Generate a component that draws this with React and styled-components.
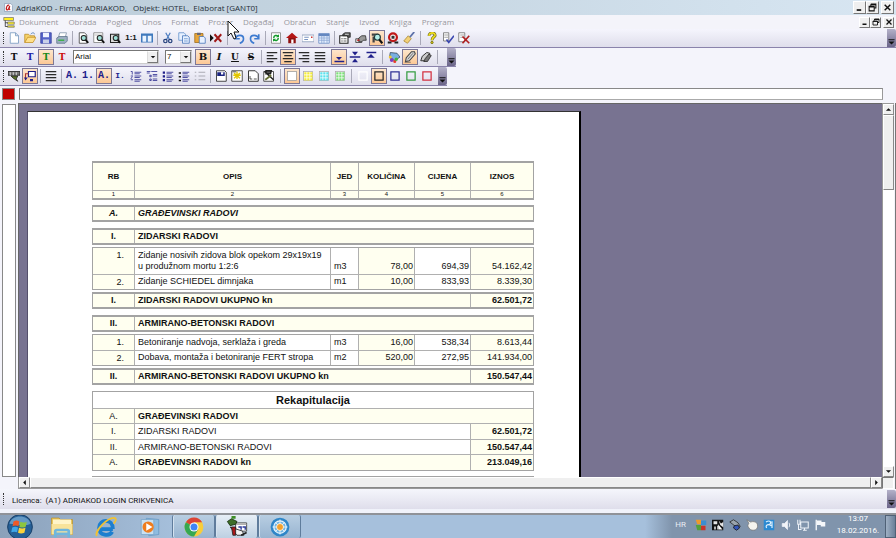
import React from "react";
import styled, { createGlobalStyle, css } from "styled-components";

const GlobalStyle = createGlobalStyle`
  *, *::before, *::after { box-sizing: border-box; }
  html, body { margin: 0; padding: 0; overflow: hidden; }
  body { font-family: "Open Sans", sans-serif; font-size: 8px; color: #111; }
  button, input, select { font: inherit; color: inherit; margin: 0; padding: 0; border-radius: 0; }
  svg { display: block; flex: none; }
`;

const ui = `"Open Sans", "Noto Sans", sans-serif`;
const small = `Roboto, "Noto Sans", sans-serif`;
const doc = `"Liberation Sans", Arial, sans-serif`;

/* ---------- frame ---------- */

const Window = styled.div`
  position: relative;
  display: flex;
  flex-direction: column;
  height: 100vh;
  background: #f4f4fb;
`;

const TitleBar = styled.header`
  display: flex;
  align-items: center;
  gap: 3px;
  height: 15px;
  padding: 0 2px 0 4px;
  background: linear-gradient(90deg, #bccdda, #c3d3df 35%, #d3e2ee 85%, #d8e6f2);
`;

const Title = styled.h1`
  flex: 1;
  margin: 0;
  font: 400 8px/15px ${ui};
  color: #262e38;
  white-space: pre;
`;

const MenuBar = styled.nav`
  display: flex;
  align-items: center;
  height: 14px;
  padding: 0 2px 0 3px;
  background: #f4f4fa;
`;

const MenuList = styled.div`
  display: flex;
  flex: 1;
  gap: 10px;
  padding-left: 4px;
`;

const MenuItem = styled.button`
  border: 0;
  background: none;
  font: 400 8px/14px ${ui};
  color: #98989e;
`;

const WindowButtons = styled.div`
  display: flex;
`;

const WindowButton = styled.button`
  display: flex;
  align-items: center;
  justify-content: center;
  width: ${(p) => (p.$small ? 11 : 13)}px;
  height: ${(p) => (p.$small ? 11 : 13)}px;
  border: 1px solid;
  border-color: #fff #777 #777 #fff;
  background: #efefef;
  &:last-child { margin-left: 2px; }
`;

/* ---------- toolbars ---------- */

const handle = css`
  &::before {
    content: "";
    width: 1px;
    height: 12px;
    margin-right: 2px;
    border-left: 1px dotted #333;
  }
`;

const Toolbar = styled.div`
  display: flex;
  align-items: center;
  align-self: ${(p) => (p.$full ? "stretch" : "flex-start")};
  height: 19px;
  padding-left: 3px;
  border-bottom: 1px solid #8a83ab;
  background: linear-gradient(#f5f5fd, #dfdeeb);
  ${handle}
`;

const Group = styled.div`
  display: flex;
  margin-left: ${(p) => p.$gap || 0}px;
`;

const Divider = styled.span`
  width: 1px;
  height: 14px;
  margin: 0 ${(p) => (p.$wide ? 3 : 2)}px;
  background: #a9a9b8;
`;

const Tool = styled.button`
  display: flex;
  align-items: center;
  justify-content: center;
  width: 16px;
  height: 16px;
  border: 1px solid transparent;
  background: none;
  ${(p) =>
    p.$on &&
    css`
      border-color: #7d7896;
      background: linear-gradient(#fde6cc, #fcc896);
    `}
`;

const faces = {
  mono: `"Liberation Mono", monospace`,
  sans: `"Liberation Sans", sans-serif`,
  serif: `"DejaVu Serif", serif`,
};

const Letter = styled.span`
  font: ${(p) => (p.$italic ? "italic " : "")}700 ${(p) => p.$size || 9}px/12px ${(p) => faces[p.$face || "serif"]};
  color: ${(p) => p.$color || "#111"};
  text-decoration: ${(p) => p.$line || "none"};
`;

const Combo = styled.label`
  display: flex;
  width: ${(p) => p.$width}px;
  height: 14px;
  margin-left: ${(p) => p.$gap}px;
  border: 1px solid;
  border-color: #777 #ccc #ccc #777;
  background: #fff;
`;

const Select = styled.select`
  flex: 1;
  min-width: 0;
  padding-left: 1px;
  border: 0;
  appearance: none;
  background: none;
  outline: 0;
  font: 400 8px/12px ${doc};
`;

const ComboArrow = styled.span`
  display: flex;
  align-items: center;
  justify-content: center;
  width: 11px;
  border: 1px solid;
  border-color: #fff #777 #777 #ddd;
  background: #efefef;
  pointer-events: none;
`;

const Grip = styled.button`
  display: flex;
  align-items: flex-end;
  justify-content: center;
  width: 9px;
  height: 18px;
  margin-left: ${(p) => p.$gap || "auto"};
  padding-bottom: 2px;
  border: 0;
  border-radius: 0 2px 2px 0;
  background: linear-gradient(#b4b1c9, #6b6589);
`;

/* ---------- work area ---------- */

const RulerRow = styled.div`
  display: flex;
  gap: 4px;
  padding: 2px 13px 3px 2px;
`;

const Swatch = styled.button`
  width: 13px;
  height: 12px;
  border: 1px solid #888;
  background: #c00000;
`;

const Formula = styled.input`
  flex: 1;
  height: 12px;
  border: 1px solid;
  border-color: #888 #999 #aaa #777;
  background: #fff;
  outline: 0;
`;

const Work = styled.div`
  display: flex;
  flex: 1;
  min-height: 0;
  padding-left: 2px;
`;

const SideRuler = styled.div`
  width: 14px;
  margin: 1px 2px 12px 0;
  border: 1px solid #888;
  background: #fff;
`;

const Viewport = styled.div`
  display: grid;
  flex: 1;
  grid-template: minmax(0, 1fr) 12px / minmax(0, 1fr) 12px;
  padding-right: 1px;
  border-right: 1px solid #777;
`;

const Canvas = styled.main`
  overflow: hidden;
  padding: 7px 0 0 8px;
  border-top: 1px solid #666;
  border-left: 1px solid #666;
  background: #787391;
`;

const Sheet = styled.article`
  width: 554px;
  min-height: 700px;
  padding: 49px 45px 0 64px;
  border: solid;
  border-width: 1px 2px 0 1px;
  border-color: #333 #000 #000 #55506c;
  background: #fff;
`;

const Bar = styled.div`
  display: flex;
  flex-direction: ${(p) => (p.$vertical ? "column" : "row")};
  background: ${(p) => (p.$vertical ? "#fff" : "#efefef")};
  border: 1px solid #999;
  border-width: ${(p) => (p.$vertical ? "1px 0 0 1px" : "0 0 1px 1px")};
`;

const BarButton = styled.button`
  display: flex;
  flex: none;
  align-items: center;
  justify-content: center;
  width: 11px;
  height: 11px;
  border: 1px solid;
  border-color: #fff #888 #888 #fff;
  background: #f0f0f0;
`;

const Thumb = styled.div`
  flex: ${(p) => (p.$vertical ? "0 0 20%" : "1")};
  border: 1px solid;
  border-color: #fff #888 #888 #fff;
  background: #efefef;
`;

const Space = styled.div`
  flex: 1;
`;

const Corner = styled.div`
  border: 1px solid;
  border-color: #777 #fff #fff #777;
  background: #f0f0f0;
`;

/* ---------- bill of quantities ---------- */

const Table = styled.table`
  width: 100%;
  table-layout: fixed;
  border-collapse: separate;
  border-spacing: 0;
  margin-top: ${(p) => p.$gap || 0}px;
  border: solid #a3a3a3;
  border-width: ${(p) => (p.$thick ? "2px 1px" : "1px")};
  font: 400 9px/11px ${doc};
  background: #fff;
`;

const Row = styled.tr`
  height: ${(p) => p.$h}px;
  background: ${(p) => (p.$tint ? "#fffff0" : "transparent")};
  & > * {
    border-bottom: ${(p) => (p.$last ? "0" : "1px solid #b0b0b0")};
  }
`;

const cell = css`
  padding: 0;
  border-left: 1px solid #b0b0b0;
  white-space: nowrap;
  text-align: ${(p) => p.$align || "left"};
  vertical-align: middle;
  font-weight: ${(p) => (p.$bold ? 700 : 400)};
  font-style: ${(p) => (p.$italic ? "italic" : "normal")};
  font-size: ${(p) => p.$size || 9}px;
  background: ${(p) => (p.$tint ? "#fffff0" : "transparent")};
  &:first-child { border-left: 0; }
`;

const Head = styled.th`
  ${cell}
  line-height: ${(p) => (p.$size === 6 ? 7 : 11)}px;
`;

const Cell = styled.td`
  ${cell}
`;

const Code = styled(Cell)`
  text-align: center;
`;

const Text = styled(Cell)`
  padding-left: 3px;
`;

const Amount = styled(Cell)`
  padding-right: 1px;
  text-align: right;
`;

const ItemRow = styled(Row)`
  & > td {
    padding-bottom: 2px;
    vertical-align: bottom;
  }
  & > td:first-child {
    padding: 2px 10px 0 0;
    text-align: right;
    vertical-align: top;
  }
`;

/* ---------- status and taskbar ---------- */

const StatusBar = styled.footer`
  display: flex;
  align-items: center;
  height: 20px;
  padding-left: 3px;
  background: linear-gradient(#f5f6fc, #dfdeeb);
  ${handle}
`;

const License = styled.span`
  padding: 4px 0 0 6px;
  font: 400 8px/16px ${small};
  white-space: pre;
`;

const Edge = styled.div`
  height: 6px;
  border-bottom: 2px solid #8f9298;
  background: #f0f2fa;
`;

const Taskbar = styled.footer`
  display: flex;
  align-items: stretch;
  height: 23px;
  background: linear-gradient(90deg, #8ba1ba, #a6c0dc 20%, #a6c0dc 72%, #8094ac 75%, #8094ac);
`;

const TaskButton = styled.button`
  display: flex;
  align-items: center;
  justify-content: center;
  width: 44px;
  overflow: hidden;
  border: 0;
  background: none;
  &:first-child { width: 40px; }
  ${(p) =>
    p.$open &&
    css`
      width: 43px;
      border: solid #5f7c9c;
      border-width: 0 1px;
      border-radius: 2px;
      background: ${p.$active ? "linear-gradient(#e6eef6, #bdd0e2)" : "linear-gradient(#b8cee2, #98b4d0)"};
      box-shadow: inset 1px 0 #d4e2ef;
    `}
`;

const Tray = styled.div`
  display: flex;
  align-items: center;
  gap: 5px;
  margin-left: auto;
  padding-bottom: 4px;
  color: #fff;
  font: 400 8px/12px ${small};
`;

const Language = styled.span`
  margin-right: 4px;
  color: #e8edf4;
`;

const Clock = styled.time`
  width: 54px;
  text-align: center;
`;

const Desktop = styled.button`
  width: 11px;
  border: 1px solid #4f6176;
  background: linear-gradient(90deg, #9fb0c4, #6a7f98);
`;

const Pointer = styled.svg`
  position: absolute;
  left: 227px;
  top: 20px;
  pointer-events: none;
`;

/* ---------- icons ---------- */

const navy = "#20208a";
const page = <path d="M3 1h7l3 3v11H3z" fill="#fff" stroke="#333" />;
const lens = (
  <>
    <circle cx="9" cy="8" r="3.4" fill="#9fe0d8" stroke="#222" strokeWidth="1.4" />
    <path d="M11.5 10.5l3.5 4" stroke="#111" strokeWidth="2.4" />
  </>
);
const lines = (rows) =>
  rows.map(([x, w], i) => <rect key={i} x={x} y={1.4 + i * 4} width={w} height="1.6" fill="#222" />);
const listLines = <path d="M6 3h9M6 8h9M6 13h9M6 5h7M6 10h7M6 15h7" stroke={navy} />;
const grid = (color) => (
  <>
    <rect x="2" y="2" width="12" height="12" fill="#fff" stroke="#aaa" />
    {[3, 7, 11].map((x) => [3, 7, 11].map((y) => <rect key={`${x}-${y}`} x={x} y={y} width="3" height="3" fill={color} />))}
  </>
);
const box = (color) => <rect x="2.5" y="2.5" width="11" height="11" fill="none" stroke={color} strokeWidth="1.6" />;

const drawings = {
  app: (
    <>
      <path d="M1 1h11l3 3v11H1z" fill="#fff" stroke="#6c85a8" />
      <path d="M9 4c-4-1-6 6-4 8 2 1 4-2 5-7l-1 6 2 1" fill="none" stroke="#c32020" strokeWidth="2.3" />
    </>
  ),
  tree: (
    <>
      <path d="M1 2h13v4H1zM6 8h9v3H6zM6 13h9v2H6z" fill="#ffee20" stroke="#777" />
      <path d="M3 6v8h3M3 9h3" stroke="#222" fill="none" />
    </>
  ),
  fresh: <path d="M3 1h7l4 4v10H3zM10 1v4h4" fill="#fff" stroke="#6d93bb" />,
  open: (
    <>
      <path d="M1 14V3h5l2 2h6v3" fill="#f6d26b" stroke="#b98a22" />
      <path d="M1 14l4-7h11l-4 7z" fill="#ffe08a" stroke="#c28e20" />
      <path d="M9 3c2-3 5-2 5 0" stroke="#3b70b0" fill="none" />
    </>
  ),
  save: (
    <>
      <path d="M1 1h14v14H1z" fill="#5462c8" stroke="#333d9c" />
      <path d="M4 1h8v6H4z" fill="#eef2ff" />
      <path d="M4 10h8v5H4z" fill="#c9d0e8" />
    </>
  ),
  print: (
    <>
      <path d="M5 1h9l-2 7H3z" fill="#fff" stroke="#7c8fa6" />
      <path d="M1 8l3-2h11v6l-3 3H1z" fill="#9caec2" stroke="#5b7088" />
      <path d="M3 11h8" stroke="#3fb04a" strokeWidth="2" />
    </>
  ),
  preview: <>{page}{lens}</>,
  previewB: (
    <>
      <path d="M1 1h12v13H1z" fill="#fff" stroke="#777" />
      <path d="M2 4h10" stroke="#aaa" />
      {lens}
    </>
  ),
  previewC: (
    <>
      <path d="M2 3h11v11H2z" fill="#ddd" stroke="#222" strokeWidth="1.4" />
      {lens}
    </>
  ),
  book: (
    <>
      <path d="M0 2h16v12H0z" fill="#3f79bd" />
      <path d="M2 5h5v8H2zM9 5h5v8H9z" fill="#eaf4ff" />
    </>
  ),
  cut: (
    <>
      <path d="M5 1l5 9M11 1L6 10" stroke="#4b7cc0" strokeWidth="1.6" />
      <circle cx="4.5" cy="12" r="2.3" fill="none" stroke="#23407c" strokeWidth="1.6" />
      <circle cx="11" cy="12" r="2.3" fill="none" stroke="#23407c" strokeWidth="1.6" />
    </>
  ),
  copy: (
    <>
      <path d="M1 1h7l2 2v8H1z" fill="#e7f0ff" stroke="#5a8cc8" />
      <path d="M6 5h7l2 2v8H6z" fill="#e7f0ff" stroke="#3d6fb5" />
      <path d="M8 9h5M8 12h5" stroke="#5a8cc8" />
    </>
  ),
  paste: (
    <>
      <path d="M1 2h11v12H1z" fill="#e8a63a" stroke="#9a6a1c" />
      <path d="M4 1h5v3H4z" fill="#667" />
      <path d="M7 6h6l2 2v7H7z" fill="#e7f0ff" stroke="#3d6fb5" />
    </>
  ),
  remove: (
    <>
      <path d="M0 3l5 5-5 5z" fill="#111" />
      <path d="M6 3l9 10M15 3L6 13" stroke="#a01818" strokeWidth="2.6" />
    </>
  ),
  undo: <path d="M3 3v6h6M3 9c2-6 11-6 11 0 0 3-2 5-5 6" fill="none" stroke="#3c7ad0" strokeWidth="2.2" />,
  redo: <path d="M13 3v6H7M13 9C11 3 2 3 2 9c0 3 2 5 5 6" fill="none" stroke="#3c7ad0" strokeWidth="2.2" />,
  refresh: (
    <>
      <path d="M2 1h12v14H2z" fill="#fff" stroke="#777" />
      <path d="M5 8c0-4 4-4 6-2M11 8c0 4-4 4-6 2" fill="none" stroke="#149a2c" strokeWidth="2" />
      <path d="M12 3v4H8zM4 13V9h4z" fill="#149a2c" />
    </>
  ),
  home: (
    <>
      <path d="M0 8l8-7 8 7z" fill="#b31515" />
      <path d="M3 8h10v7H3z" fill="#8d1010" />
      <path d="M7 10h3v5H7z" fill="#fff" />
    </>
  ),
  mail: (
    <>
      <path d="M0 4h16v9H0z" fill="#fff" stroke="#8294b4" />
      <path d="M3 7h6M3 10h5" stroke="#4c6fae" />
      <path d="M12 6h2v2h-2z" fill="#c33" />
    </>
  ),
  table: (
    <>
      <path d="M1 2h14v13H1z" fill="#e8f1ff" stroke="#6487c0" />
      <path d="M1 4h14" stroke="#6487c0" strokeWidth="3" />
      <path d="M1 8h14M1 11h14M5 5v10M8 5v10M12 5v10" stroke="#86a3d2" />
    </>
  ),
  props: (
    <>
      <path d="M1 5h11v10H1z" fill="#fff" stroke="#222" strokeWidth="1.4" />
      <path d="M3 9h2M6 9h4M3 12h2M6 12h4" stroke="#333" />
      <path d="M5 3l3-2h7v6h-3l-1-2H5z" fill="#555" stroke="#222" />
      <path d="M8 3h5" stroke="#fff" />
    </>
  ),
  label: (
    <>
      <path d="M1 9h8v5H1z" fill="#ddd" stroke="#333" />
      <path d="M5 8l4-3h5l1 6h-4l-2 2H5z" fill="#999" stroke="#222" />
      <path d="M3 11h3" stroke="#b22" strokeWidth="2" />
    </>
  ),
  find: (
    <>
      <path d="M1 2h9v3H1zM2 6h3v8H2z" fill="#444" />
      <circle cx="8.5" cy="7" r="4" fill="#b5efe9" stroke="#1f3a3a" strokeWidth="1.6" />
      <path d="M11 10l4 5" stroke="#111" strokeWidth="2.8" />
    </>
  ),
  omega: (
    <>
      <circle cx="8" cy="7" r="5.2" fill="#fff" stroke="#c01818" strokeWidth="3" />
      <path d="M1 14h5M10 14h5" stroke="#222" strokeWidth="2.4" />
      <path d="M6 5h4v4H6z" fill="#333" />
    </>
  ),
  brush: (
    <>
      <path d="M15 0L9 7" stroke="#5b6fa8" strokeWidth="2.4" />
      <path d="M7 5l4 4-5 6-5-3z" fill="#f2d077" stroke="#a8842d" />
    </>
  ),
  help: (
    <>
      <path d="M4 5c0-5 9-5 8 0-1 2-4 2-4 6" fill="none" stroke="#6a6410" strokeWidth="3.8" />
      <path d="M4 5c0-5 9-5 8 0-1 2-4 2-4 6" fill="none" stroke="#f0e020" strokeWidth="2.2" />
      <circle cx="8" cy="14" r="1.6" fill="#d8c810" stroke="#6a6410" />
    </>
  ),
  check: (
    <>
      <path d="M2 1h7v11H2z" fill="#fff" stroke="#666" />
      <path d="M3 4h5M3 7h5" stroke="#888" />
      <path d="M6 10l3 4 7-9" fill="none" stroke="#3a47b0" strokeWidth="2.2" />
    </>
  ),
  uncheck: (
    <>
      <path d="M1 1h8v12H1z" fill="#fff" stroke="#666" />
      <path d="M3 4h5M3 7h5" stroke="#888" />
      <path d="M6 6l9 9M15 5L6 15" stroke="#b02020" strokeWidth="2.2" />
    </>
  ),
  left: lines([[1, 14], [1, 9], [1, 14], [1, 9]]),
  center: lines([[1, 14], [3, 10], [1, 14], [3, 10]]),
  right: lines([[1, 14], [6, 9], [1, 14], [6, 9]]),
  justify: lines([[1, 14], [1, 14], [1, 14], [1, 14]]),
  bottom: <path d="M2 13h13v2H2zM4 8h8l-4 4z" fill={navy} />,
  middle: <path d="M1 7h14v2H1zM4 1h8L8 6zM4 15h8l-4-5z" fill={navy} />,
  top: <path d="M2 1h13v2H2zM3 9l5-5 5 5z" fill={navy} />,
  paint: (
    <>
      <path d="M3 2l9 1 4 5-7 5-7-4z" fill="#78aee0" stroke="#345" />
      <circle cx="5" cy="12" r="2.6" fill="#7c3fbe" />
      <circle cx="9" cy="14" r="2" fill="#e83d2c" />
      <circle cx="11" cy="11" r="2.2" fill="#44b33c" />
      <circle cx="3" cy="8" r="2" fill="#f2c630" />
    </>
  ),
  pen: (
    <>
      <path d="M2 14l1-5 7-8h4l1 3-8 9z" fill="#d5d5d5" stroke="#444" strokeWidth="1.4" />
      <path d="M5 11l7-8M1 15h8" stroke="#555" />
    </>
  ),
  pens: (
    <>
      <path d="M1 13l2-6 6-5 4 1-1 4-5 6z" fill="#ccc" stroke="#333" strokeWidth="1.3" />
      <path d="M5 14l2-4 5-6 3 2-5 8z" fill="#777" stroke="#222" />
    </>
  ),
  plot: (
    <>
      <path d="M0 2h16v5H0z" fill="#777" stroke="#111" />
      <path d="M3 3v4M7 3v4M11 3v4" stroke="#fff" />
      <path d="M4 8h9l-2 4 2 3-6-4z" fill="#58702c" stroke="#222" />
    </>
  ),
  flow: (
    <>
      <path d="M6 2h9v7H6z" fill="#fff" stroke={navy} strokeWidth="1.6" />
      <path d="M6 5H2v8" fill="none" stroke="#a33" strokeWidth="1.4" />
      <path d="M0 10h5l-3 4z" fill={navy} />
      <path d="M8 12h4v3H8z" fill={navy} />
    </>
  ),
  listA: <>{listLines}<path d="M1 2h2v4M1 8h3M1 13h3M3 9l-2 3" stroke={navy} fill="none" /></>,
  listB: (
    <path d="M1 2h5M1 4h4M7 2h8M9 6h6M9 8h6M9 12h6M9 14h6M5 7h2v2H5zM5 12h2v2H5z" stroke={navy} fill="none" />
  ),
  listC: <>{listLines}<path d="M1 2h3v3H1zM1 7h3v3H1zM1 12h3v3H1z" fill={navy} /></>,
  listD: <>{listLines}<path d="M1 3h3v2H1zM1 8h3v2H1zM1 13h3v2H1z" fill="#111" /></>,
  listOff: <path d="M6 3h9M6 8h9M6 13h9M1 3h2M1 8h2M1 13h2" stroke="#aaaab4" strokeWidth="1.6" />,
  disk: (
    <>
      <path d="M2 1h11l2 2v12H2z" fill="#fff" stroke="#111" />
      <path d="M3 3h10v5H3z" fill="#1b2480" />
      <path d="M8 3h3v3H8z" fill="#fff" />
    </>
  ),
  sun: (
    <>
      <path d="M1 1h14v14H1z" fill="#fff" stroke="#222" />
      <path d="M8 2v10M3 7h10M4 4l8 7M12 4l-8 7" stroke="#e2c600" strokeWidth="1.8" />
      <path d="M2 2h5v1H2z" fill="#222" />
    </>
  ),
  note: (
    <>
      <path d="M2 1h9l4 4v10H2z" fill="#fff" stroke="#333" strokeWidth="1.3" />
      <path d="M4 8v4h3M9 12h4" stroke="#222" fill="none" />
    </>
  ),
  tools: (
    <>
      <path d="M1 2h13v13H1z" fill="#fff" stroke="#222" />
      <path d="M2 2l12 11M4 1h7l-1 4H4z" stroke="#222" strokeWidth="2" fill="#555" />
      <path d="M3 13l8-6" stroke="#667036" strokeWidth="2.4" />
    </>
  ),
  blank: <rect x="2" y="2" width="12" height="12" fill="#fff" stroke="#999" />,
  gridY: grid("#f4ec3a"),
  gridC: grid("#5ce2ee"),
  gridG: grid("#7de07a"),
  boxWhite: box("#fff"),
  boxBlack: box("#222"),
  boxNavy: box("#2a2a92"),
  boxGreen: box("#2f9a3c"),
  boxRed: box("#d22a3a"),
  min: <path d="M3 11h8v3H3z" fill="#111" />,
  restore: <path d="M5 2h9v7h-3M5 2v3M5 3h9M2 6h9v8H2zM2 7h9" fill="none" stroke="#111" strokeWidth="1.8" />,
  close: <path d="M3 3l10 10M13 3L3 13" stroke="#111" strokeWidth="2.6" />,
  up: <path d="M2 11h12L8 5z" fill="#111" />,
  down: <path d="M2 5h12l-6 6z" fill="#111" />,
  back: <path d="M11 2v12L5 8z" fill="#111" />,
  next: <path d="M5 2v12l6-6z" fill="#111" />,
  more: <path d="M1 3h14v2H1zM1 8h14l-7 7z" fill="#111" />,
  orb: (
    <>
      <circle cx="8" cy="8" r="7.6" fill="#255f96" stroke="#183e66" strokeWidth="0.6" />
      <path d="M1.5 6C3 0 13 0 14.5 6c-4 2-9 0-13 0z" fill="#7fb2d8" opacity="0.7" />
      <path d="M4 4.6c1.5-.8 2.5-.6 3.6 0L7 7.6c-1-.6-2.4-.6-3.6 0z" fill="#ee5a28" />
      <path d="M8.2 4.8c1.4.7 2.6.6 4-.1l-.7 3.1c-1.4.7-2.7.7-3.9 0z" fill="#8dc63f" />
      <path d="M3.2 8.3c1.3-.7 2.5-.6 3.6 0l-.6 3c-1.2-.6-2.3-.6-3.6 0z" fill="#3fa6e8" />
      <path d="M7.4 8.5c1.4.7 2.6.6 4 0l-.7 3c-1.4.6-2.7.6-3.9 0z" fill="#fbd23a" />
    </>
  ),
  folder: (
    <>
      <path d="M1 2h5l1 1h8v10H1z" fill="#e9c75c" stroke="#b99230" strokeWidth="0.5" />
      <path d="M2 3h12v3H2z" fill="#fff4c8" />
      <path d="M1 6h14v7H1z" fill="#f8e39a" />
      <path d="M3.5 15v-4q0-1 1-1h7q1 0 1 1v4M3.5 12.5h9" fill="none" stroke="#6fb6dd" strokeWidth="1.8" />
    </>
  ),
  ie: (
    <>
      <path d="M13 9.5H4.5M13 9.5C13 1.5 3 2 3 8.5c0 6 7.5 6.5 9.5 3" fill="none" stroke="#1d7fcf" strokeWidth="2.8" />
      <path d="M1.5 14.5C-1 12 9 .5 14.5 1.5c1.5.6 0 3-1 4" fill="none" stroke="#f1c232" strokeWidth="1.3" />
    </>
  ),
  media: (
    <>
      <path d="M5 1l10 1v12l-8 1z" fill="#8fbce0" stroke="#5d91bd" strokeWidth="0.5" />
      <path d="M1 2h10v12H1z" fill="#c8e0f2" stroke="#6b9cc4" strokeWidth="0.5" />
      <circle cx="6.5" cy="8" r="4.5" fill="#ee7d1f" />
      <path d="M5 5l5 3-5 3z" fill="#fff" />
    </>
  ),
  chrome: (
    <>
      <circle cx="8" cy="8" r="7.5" fill="#f7cd3b" />
      <path d="M8 8L1.5 4.25A7.5 7.5 0 0 1 14.5 4.25H8z" fill="#db4437" />
      <path d="M8 8L1.5 4.25A7.5 7.5 0 0 0 8 15.5l3.2-5.6z" fill="#36a852" />
      <circle cx="8" cy="8" r="3.6" fill="#fff" />
      <circle cx="8" cy="8" r="2.8" fill="#4285f4" />
    </>
  ),
  adria: (
    <>
      <path d="M7 5h8v6H7z" fill="#fff" stroke="#333" strokeWidth="0.6" />
      <path d="M7 6h8" stroke="#999" strokeWidth="0.8" />
      <path d="M9 8h2v2M12 8h2v2" stroke="#2b3a9a" fill="none" />
      <path d="M1 4l3-2 4 2-1 2-4 1z" fill="#3e6e28" stroke="#152e0c" strokeWidth="0.6" />
      <path d="M4 0h3v2H4z" fill="#3e8e28" />
      <path d="M3 8l9 3 1 3H8z" fill="#f2f2f2" stroke="#222" strokeWidth="0.6" />
      <path d="M4 8h3v6H5z" fill="#a81818" stroke="#222" strokeWidth="0.6" />
      <path d="M11 14l4-2" stroke="#222" strokeWidth="1.2" />
    </>
  ),
  wheel: (
    <>
      <circle cx="8" cy="8" r="7.5" fill="#2e86c8" />
      <circle cx="8" cy="8" r="5" fill="#6db4e4" stroke="#e9f4fb" />
      <path d="M8 2v12M2 8h12M4 4l8 8M12 4l-8 8" stroke="#dceef9" strokeWidth="0.8" />
      <circle cx="8" cy="8" r="2.8" fill="#f2a12d" stroke="#fff" strokeWidth="0.6" />
    </>
  ),
  trayA: (
    <>
      <path d="M1 1h7v6H3z" fill="#f09a2c" />
      <path d="M8 2h7v6H8z" fill="#3a8ed0" />
      <path d="M1 8h7v7H3z" fill="#55a03a" />
      <path d="M8 9h6v6H8z" fill="#c8352a" />
    </>
  ),
  trayB: (
    <>
      <path d="M0 1h15v14H0z" fill="#111" />
      <path d="M2 3h5v4H2zM9 2l3 4 3-2v7l-4-3zM3 10h2v4H3zM7 9h2v5H7z" fill="#e6e6e6" />
      <path d="M8 7l6 7h-5z" fill="#fff" />
    </>
  ),
  trayC: (
    <>
      <path d="M1 4l5-3 6 4 3 5-4 2-6-5z" fill="#9aa4ac" stroke="#222" />
      <path d="M7 9l5-1 2 4-4 3-4-3z" fill="#3456b8" stroke="#111" />
    </>
  ),
  trayD: <path d="M1 1l5 3c7-2 11 2 9 8-2 4-9 4-11 0-2-2-2-5 0-6z" fill="#f4f4ef" stroke="#777" />,
  trayE: (
    <>
      <path d="M1 1h14v14H1z" fill="#2c8ad2" />
      <path d="M4 4c5-3 8 0 5 3M5 12c-3-4 3-6 6-3M12 3v9" fill="none" stroke="#dff2ff" strokeWidth="1.6" />
    </>
  ),
  trayF: <path d="M3 6h3l4-4v12l-4-4H3zM12 5q2 3 0 6" fill="#f2f4f8" stroke="#eef2f8" />,
  trayG: <path d="M5 4h10v8H5zM8 15h5M10 12v3M1 1v6h3V1M2 7v7h4" fill="none" stroke="#eef2f8" strokeWidth="1.4" />,
  trayH: (
    <>
      <path d="M3 1v14" stroke="#f5f7fa" strokeWidth="1.8" />
      <path d="M4 2h6v2h5v6H9V8H4z" fill="#f5f7fa" />
    </>
  ),
};

const Icon = ({ name, size = 12 }) => (
  <svg width={size} height={size} viewBox="0 0 16 16" fill="none" aria-hidden="true">
    {drawings[name]}
  </svg>
);

const Tools = ({ names, on, gap }) => (
  <Group $gap={gap}>
    {names.map((name) => (
      <Tool key={name} aria-label={name} $on={on === name}>
        <Icon name={name} />
      </Tool>
    ))}
  </Group>
);

const Dropdown = ({ label, value, width, gap }) => (
  <Combo $width={width} $gap={gap}>
    <Select aria-label={label} defaultValue={value}>
      <option>{value}</option>
    </Select>
    <ComboArrow>
      <Icon name="down" size={6} />
    </ComboArrow>
  </Combo>
);

const Controls = ({ compact }) => (
  <WindowButtons>
    {["min", "restore", "close"].map((name) => (
      <WindowButton key={name} $small={compact} aria-label={name}>
        <Icon name={name} size={compact ? 8 : 9} />
      </WindowButton>
    ))}
  </WindowButtons>
);

/* ---------- document parts ---------- */

const Columns = () => (
  <colgroup>
    {[41, 196, 28, 56, 56, 63].map((w, i) => (
      <col key={i} width={w} />
    ))}
  </colgroup>
);

const heads = ["RB", "OPIS", "JED", "KOLIČINA", "CIJENA", "IZNOS"];

const Heading = ({ code, text, total, italic, gap }) => (
  <Table $thick $gap={gap}>
    <Columns />
    <tbody>
      <Row $h={13} $tint $last>
        <Code $bold $italic={italic}>{code}</Code>
        <Text $bold $italic={italic} colSpan={total ? 4 : 5}>{text}</Text>
        {total && <Amount $bold>{total}</Amount>}
      </Row>
    </tbody>
  </Table>
);

const Items = ({ rows }) => (
  <Table $gap={2}>
    <Columns />
    <tbody>
      {rows.map(([code, text, unit, qty, price, sum], i) => (
        <ItemRow key={code} $h={text.length > 1 ? 27 : i ? 14 : 16} $last={i === rows.length - 1}>
          <Cell $tint>{code}</Cell>
          <Text>
            {text.map((line) => (
              <div key={line}>{line}</div>
            ))}
          </Text>
          <Text>{unit}</Text>
          <Amount $tint>{qty}</Amount>
          <Amount>{price}</Amount>
          <Amount $tint>{sum}</Amount>
        </ItemRow>
      ))}
    </tbody>
  </Table>
);

const works = [
  ["1.", ["Zidanje nosivih zidova blok opekom 29x19x19", "u produžnom mortu 1:2:6"], "m3", "78,00", "694,39", "54.162,42"],
  ["2.", ["Zidanje SCHIEDEL dimnjaka"], "m1", "10,00", "833,93", "8.339,30"],
];
const concrete = [
  ["1.", ["Betoniranje nadvoja, serklaža i greda"], "m3", "16,00", "538,34", "8.613,44"],
  ["2.", ["Dobava, montaža i betoniranje FERT stropa"], "m2", "520,00", "272,95", "141.934,00"],
];

const menus = ["Dokument", "Obrada", "Pogled", "Unos", "Format", "Prozor", "Događaj", "Obračun", "Stanje", "Izvod", "Knjiga", "Program"];

export default function App() {
  return (
    <Window>
      <GlobalStyle />
      <TitleBar>
        <Icon name="app" size={9} />
        <Title>{"AdriaKOD - Firma: ADRIAKOD,   Objekt: HOTEL,  Elaborat [GANT0]"}</Title>
        <Controls />
      </TitleBar>
      <MenuBar>
        <Icon name="tree" size={12} />
        <MenuList>
          {menus.map((m) => (
            <MenuItem key={m}>{m}</MenuItem>
          ))}
        </MenuList>
        <Controls compact />
      </MenuBar>

      <Toolbar $full>
        <Tools names={["fresh", "open", "save", "print"]} />
        <Divider />
        <Tools names={["preview", "previewB", "previewC"]} />
        <Group>
          <Tool><Letter $face="sans" $size={8}>1:1</Letter></Tool>
        </Group>
        <Tools names={["book"]} />
        <Divider />
        <Tools names={["cut", "copy", "paste", "remove"]} />
        <Divider $wide />
        <Tools names={["undo", "redo"]} />
        <Divider />
        <Tools names={["refresh", "home", "mail", "table"]} />
        <Divider />
        <Tools names={["props", "label", "find", "omega", "brush"]} on="find" />
        <Divider $wide />
        <Tools names={["help", "check", "uncheck"]} />
        <Grip aria-label="more"><Icon name="more" size={7} /></Grip>
      </Toolbar>

      <Toolbar>
        <Group>
          <Tool><Letter>T</Letter></Tool>
          <Tool><Letter $color="#2020a8">T</Letter></Tool>
          <Tool $on><Letter $color="#188a18">T</Letter></Tool>
          <Tool><Letter $color="#cc1010">T</Letter></Tool>
        </Group>
        <Dropdown label="Font" value="Arial" width={86} gap={3} />
        <Dropdown label="Size" value="7" width={27} gap={6} />
        <Group $gap={3}>
          <Tool $on><Letter $size={10}>B</Letter></Tool>
          <Tool><Letter $size={10} $italic>I</Letter></Tool>
          <Tool><Letter $line="underline">U</Letter></Tool>
          <Tool><Letter $line="line-through">S</Letter></Tool>
        </Group>
        <Divider />
        <Tools names={["left", "center", "right", "justify"]} on="center" />
        <Tools names={["bottom", "middle", "top"]} on="bottom" gap={3} />
        <Divider $wide />
        <Tools names={["paint", "pen", "pens"]} on="pen" />
        <Divider $wide />
        <Grip $gap="6px" aria-label="more"><Icon name="more" size={7} /></Grip>
      </Toolbar>

      <Toolbar>
        <Tools names={["plot", "flow"]} on="flow" />
        <Divider />
        <Tools names={["justify"]} />
        <Divider />
        <Group>
          <Tool><Letter $face="mono" $size={10} $color={navy}>A.</Letter></Tool>
          <Tool><Letter $face="mono" $size={10} $color={navy}>1.</Letter></Tool>
          <Tool $on><Letter $face="mono" $size={10} $color={navy}>A.</Letter></Tool>
          <Tool><Letter $face="mono" $size={8} $color={navy}>I.</Letter></Tool>
        </Group>
        <Tools names={["listA", "listB", "listC", "listD", "listOff"]} />
        <Divider />
        <Tools names={["disk", "sun", "note", "tools"]} />
        <Divider $wide />
        <Tools names={["blank", "gridY", "gridC", "gridG"]} on="blank" />
        <Divider $wide />
        <Tools names={["boxWhite", "boxBlack", "boxNavy", "boxGreen", "boxRed"]} on="boxBlack" />
        <Grip $gap="3px" aria-label="more"><Icon name="more" size={7} /></Grip>
      </Toolbar>

      <RulerRow>
        <Swatch aria-label="color" />
        <Formula aria-label="content" />
      </RulerRow>

      <Work>
        <SideRuler />
        <Viewport>
          <Canvas>
            <Sheet>
              <Table $thick>
                <Columns />
                <thead>
                  <Row $h={28} $tint>
                    {heads.map((h) => (
                      <Head key={h} $bold $align="center" $size={8}>{h}</Head>
                    ))}
                  </Row>
                  <Row $h={7} $tint $last>
                    {heads.map((h, i) => (
                      <Head key={h} $align="center" $size={6}>{i + 1}</Head>
                    ))}
                  </Row>
                </thead>
              </Table>
              <Heading code="A." text="GRAĐEVINSKI RADOVI" italic gap={5} />
              <Heading code="I." text="ZIDARSKI RADOVI" gap={6} />
              <Items rows={works} />
              <Heading code="I." text="ZIDARSKI RADOVI UKUPNO kn" total="62.501,72" gap={2} />
              <Heading code="II." text="ARMIRANO-BETONSKI RADOVI" gap={6} />
              <Items rows={concrete} />
              <Heading code="II." text="ARMIRANO-BETONSKI RADOVI UKUPNO kn" total="150.547,44" gap={2} />
              <Table $gap={6}>
                <Columns />
                <thead>
                  <Row $h={17}>
                    <Head colSpan={6} $bold $align="center" $size={11}>Rekapitulacija</Head>
                  </Row>
                </thead>
                <tbody>
                  <Row $h={15} $tint>
                    <Code>A.</Code>
                    <Text $bold colSpan={5}>GRAĐEVINSKI RADOVI</Text>
                  </Row>
                  <Row $h={16}>
                    <Code $tint>I.</Code>
                    <Text colSpan={4}>ZIDARSKI RADOVI</Text>
                    <Amount $bold $tint>62.501,72</Amount>
                  </Row>
                  <Row $h={15}>
                    <Code $tint>II.</Code>
                    <Text colSpan={4}>ARMIRANO-BETONSKI RADOVI</Text>
                    <Amount $bold $tint>150.547,44</Amount>
                  </Row>
                  <Row $h={15} $tint $last>
                    <Code>A.</Code>
                    <Text $bold colSpan={4}>GRAĐEVINSKI RADOVI kn</Text>
                    <Amount $bold>213.049,16</Amount>
                  </Row>
                </tbody>
              </Table>
              <Heading gap={5} />
            </Sheet>
          </Canvas>
          <Bar $vertical>
            <BarButton aria-label="up"><Icon name="up" size={7} /></BarButton>
            <Thumb $vertical />
            <Space />
            <BarButton aria-label="down"><Icon name="down" size={7} /></BarButton>
          </Bar>
          <Bar>
            <BarButton aria-label="left"><Icon name="back" size={7} /></BarButton>
            <Thumb />
            <BarButton aria-label="right"><Icon name="next" size={7} /></BarButton>
          </Bar>
          <Corner />
        </Viewport>
      </Work>

      <StatusBar>
        <License>{"Licenca:  (A1) ADRIAKOD LOGIN CRIKVENICA"}</License>
        <Grip aria-label="more"><Icon name="more" size={7} /></Grip>
      </StatusBar>
      <Edge />
      <Taskbar>
        <TaskButton aria-label="Start"><Icon name="orb" size={26} /></TaskButton>
        <TaskButton aria-label="Explorer"><Icon name="folder" size={24} /></TaskButton>
        <TaskButton aria-label="Internet Explorer"><Icon name="ie" size={22} /></TaskButton>
        <TaskButton aria-label="Media Player"><Icon name="media" size={20} /></TaskButton>
        <TaskButton aria-label="Chrome" $open><Icon name="chrome" size={20} /></TaskButton>
        <TaskButton aria-label="AdriaKOD" $open $active><Icon name="adria" size={22} /></TaskButton>
        <TaskButton aria-label="Navigator" $open><Icon name="wheel" size={20} /></TaskButton>
        <Tray>
          <Language>HR</Language>
          {["A", "B", "C", "D", "E", "F", "G", "H"].map((k) => (
            <Icon key={k} name={`tray${k}`} size={12} />
          ))}
          <Clock>13:07<br />18.02.2016.</Clock>
        </Tray>
        <Desktop aria-label="Desktop" />
      </Taskbar>

      <Pointer width="13" height="20" viewBox="0 0 13 20">
        <path d="M1 1v15l3-3 3 6 2-1-2-6h5z" fill="#fff" stroke="#111" />
      </Pointer>
    </Window>
  );
}
